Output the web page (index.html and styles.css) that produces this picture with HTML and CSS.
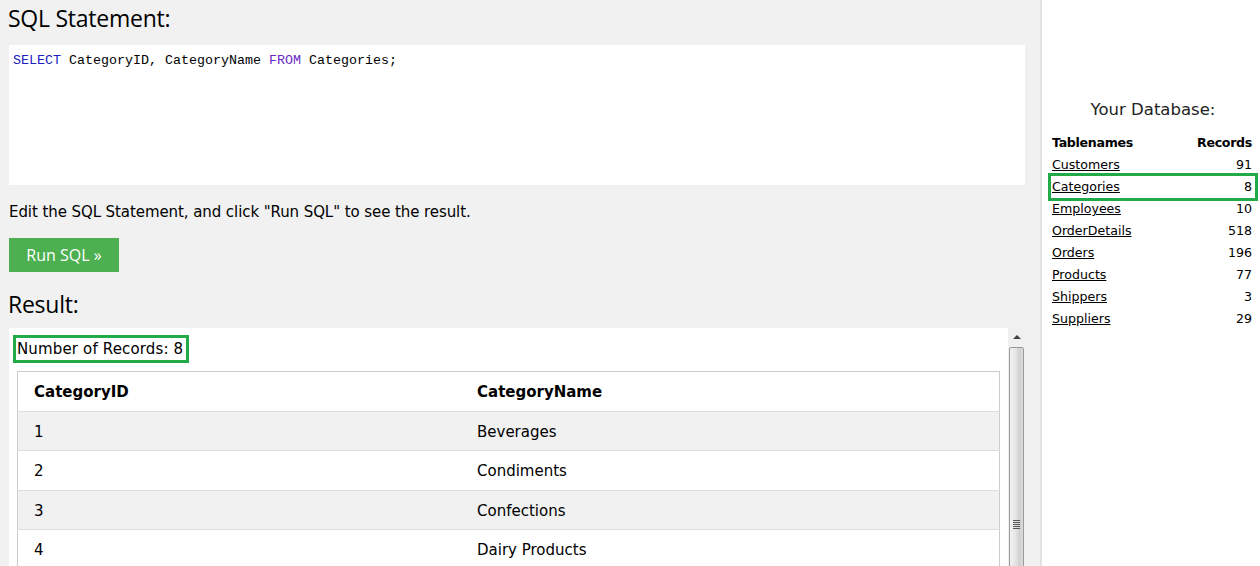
FILE: index.html
```html
<!DOCTYPE html>
<html>
<head>
<meta charset="utf-8">
<link rel="stylesheet" href="styles.css">
</head>
<body>
<div class="left">
  <h2 class="heading h-sql">SQL Statement:</h2>
  <div class="code"><span class="kw">SELECT</span> CategoryID, CategoryName <span class="kw2">FROM</span> Categories;</div>
  <p class="hint">Edit the SQL Statement, and click "Run SQL" to see the result.</p>
  <button class="run">Run SQL »</button>
  <h2 class="heading h-result">Result:</h2>
  <div class="result">
    <div class="result-content">
      <div class="records">Number of Records: 8</div>
      <table class="grid">
        <tr><th class="c1">CategoryID</th><th>CategoryName</th></tr>
        <tr><td class="c1">1</td><td>Beverages</td></tr>
        <tr><td class="c1">2</td><td>Condiments</td></tr>
        <tr><td class="c1">3</td><td>Confections</td></tr>
        <tr><td class="c1">4</td><td>Dairy Products</td></tr>
      </table>
    </div>
    <div class="scrollbar">
      <div class="sb-up"><span class="sb-arrow"></span></div>
      <div class="sb-thumb"><span class="sb-grip"></span></div>
    </div>
  </div>
</div>
<div class="right">
  <h3 class="db-title">Your Database:</h3>
  <div class="db">
    <div class="db-row db-head"><span>Tablenames</span><span>Records</span></div>
    <div class="db-row"><a href="#">Customers</a><span>91</span></div>
    <div class="db-row hl"><a href="#">Categories</a><span>8</span></div>
    <div class="db-row"><a href="#">Employees</a><span>10</span></div>
    <div class="db-row"><a href="#">OrderDetails</a><span>518</span></div>
    <div class="db-row"><a href="#">Orders</a><span>196</span></div>
    <div class="db-row"><a href="#">Products</a><span>77</span></div>
    <div class="db-row"><a href="#">Shippers</a><span>3</span></div>
    <div class="db-row"><a href="#">Suppliers</a><span>29</span></div>
  </div>
</div>
</body>
</html>
```
FILE: styles.css
```css
html, body {
  margin: 0;
  padding: 0;
  height: 566px;
  overflow: hidden;
}
body {
  display: flex;
  font-family: "DejaVu Sans", Verdana, sans-serif;
  font-size: 15px;
  color: #000;
  background: #fff;
}
.left {
  flex: none;
  background: #f1f1f1;
  padding: 0 15px 0 9px;
  border-right: 2px solid #e2e2e2;
  box-sizing: content-box;
  width: 1016px;
}
.heading {
  font-family: "Open Sans", "Noto Sans", sans-serif;
  font-weight: normal;
  font-size: 23px;
  margin: 0;
  line-height: 30px;
  letter-spacing: -0.25px;
}
.h-sql {
  padding-top: 3px;
  margin-left: -1px;
}
.code {
  margin-top: 12px;
  height: 140px;
  box-sizing: border-box;
  background: #fff;
  padding: 7px 4px;
  font-family: "Liberation Mono", monospace;
  font-size: 13.33px;
  line-height: 18px;
  color: #000;
}
.kw { color: #2020c0; }
.kw2 { color: #6a2bc4; }
.hint {
  margin: 16px 0 0;
  line-height: 22px;
  letter-spacing: -0.08px;
}
.run {
  display: block;
  margin-top: 15px;
  width: 110px;
  height: 34px;
  border: none;
  background: #4caf50;
  color: #fff;
  font-family: "Open Sans", "Noto Sans", sans-serif;
  font-size: 16px;
  padding: 0;
}
.h-result {
  margin-top: 17px;
  margin-left: -1px;
}
.result {
  margin-top: 9px;
  display: flex;
  background: #fff;
  height: 300px;
}
.result-content {
  flex: 1;
  padding: 7px 8px 0 8px;
}
.records {
  display: inline-block;
  margin-left: -4px;
  border: 3px solid #22aa48;
  padding: 0 3px 0 1px;
  line-height: 22px;
  letter-spacing: 0.15px;
}
.grid {
  margin-top: 8px;
  width: 100%;
  border-collapse: collapse;
  border: 1px solid #ccc;
}
.grid th, .grid td {
  text-align: left;
  padding: 8px 8px;
  line-height: 22.5px;
  border-bottom: 1px solid #ddd;
}
.grid th { font-weight: bold; padding-top: 9px; padding-bottom: 7px; }
.grid td { padding-top: 9px; padding-bottom: 7px; }
.grid .c1 { padding-left: 16px; width: 427px; }
.grid tr:nth-child(even) { background: #f1f1f1; }
.scrollbar {
  width: 17px;
  flex: none;
  background: #f0f0f0;
  display: flex;
  flex-direction: column;
}
.sb-up {
  height: 18px;
  position: relative;
}
.sb-arrow {
  position: absolute;
  left: 5px;
  top: 7px;
  width: 0;
  height: 0;
  border-left: 4px solid transparent;
  border-right: 4px solid transparent;
  border-bottom: 4px solid #404040;
}
.sb-thumb {
  margin: 1px 1px 0 1px;
  flex: 1;
  border: 1px solid #9a9a9a;
  border-radius: 2px;
  background: linear-gradient(to right, #f2f2f2 0%, #e6e6e6 40%, #cfcfcf 75%, #dcdcdc 100%);
  position: relative;
}
.sb-grip {
  position: absolute;
  left: 3px;
  top: 172px;
  width: 7px;
  height: 9px;
  background: repeating-linear-gradient(to bottom, #555 0 1px, transparent 1px 2px);
}
.right {
  flex: 1;
  padding: 0 5px 0 9px;
  font-size: 12.6px;
}
.db-title {
  font-family: "DejaVu Sans", Verdana, sans-serif;
  font-weight: normal;
  font-size: 16.5px;
  text-align: center;
  margin: 98px 0 0;
  line-height: 24px;
  color: #222;
}
.db {
  margin-top: 10px;
}
.db-row {
  display: flex;
  justify-content: space-between;
  height: 22px;
  line-height: 22px;
  padding: 0 3px 0 1px;
}
.db-head { font-weight: bold; letter-spacing: -0.3px; }
.db-row a { color: #000; text-decoration: underline; }
.db-row.hl { outline: 3px solid #22aa48; }
```
